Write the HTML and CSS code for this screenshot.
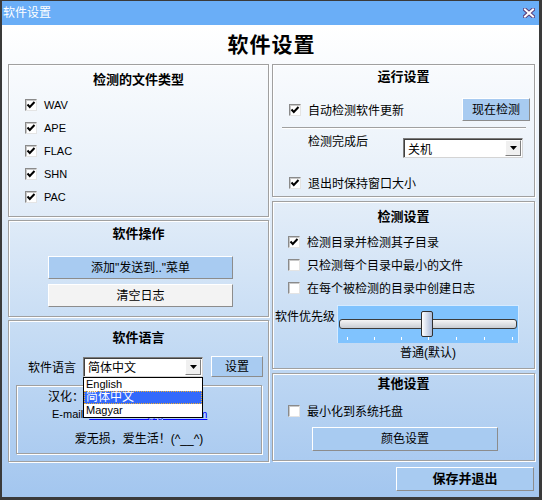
FILE: index.html
```html
<!DOCTYPE html>
<html lang="zh-CN">
<head>
<meta charset="utf-8">
<title>软件设置</title>
<link rel="stylesheet" href="styles.css">
</head>
<body>
<div class="win">
  <div class="titlebar">
    <span class="tb-text">软件设置</span>
    <svg class="close" width="12" height="10" viewBox="0 0 12 10"><path d="M2 1.5 L10 8.5 M10 1.5 L2 8.5" stroke="#5b3d7a" stroke-width="4" stroke-linecap="square"/><path d="M2 1.5 L10 8.5 M10 1.5 L2 8.5" stroke="#ffffff" stroke-width="2" stroke-linecap="square"/></svg>
  </div>
  <div class="client">
    <h1 class="big">软件设置</h1>
    <div class="cols">
      <div class="col">
        <section class="panel p-files">
          <h2>检测的文件类型</h2>
          <div class="checks">
            <div class="cb"><span class="box"><svg width="10" height="10" viewBox="0 0 10 10"><path d="M1.5 4.5 L3.8 7 L8.5 2" fill="none" stroke="#000" stroke-width="2"/></svg></span><span class="lat">WAV</span></div>
            <div class="cb"><span class="box"><svg width="10" height="10" viewBox="0 0 10 10"><path d="M1.5 4.5 L3.8 7 L8.5 2" fill="none" stroke="#000" stroke-width="2"/></svg></span><span class="lat">APE</span></div>
            <div class="cb"><span class="box"><svg width="10" height="10" viewBox="0 0 10 10"><path d="M1.5 4.5 L3.8 7 L8.5 2" fill="none" stroke="#000" stroke-width="2"/></svg></span><span class="lat">FLAC</span></div>
            <div class="cb"><span class="box"><svg width="10" height="10" viewBox="0 0 10 10"><path d="M1.5 4.5 L3.8 7 L8.5 2" fill="none" stroke="#000" stroke-width="2"/></svg></span><span class="lat">SHN</span></div>
            <div class="cb"><span class="box"><svg width="10" height="10" viewBox="0 0 10 10"><path d="M1.5 4.5 L3.8 7 L8.5 2" fill="none" stroke="#000" stroke-width="2"/></svg></span><span class="lat">PAC</span></div>
          </div>
        </section>
        <section class="panel p-ops">
          <h2>软件操作</h2>
          <div class="btn op blue">添加"发送到.."菜单</div>
          <div class="btn op light">清空日志</div>
        </section>
        <section class="panel p-lang">
          <h2>软件语言</h2>
          <div class="lang-row">
            <span class="lbl">软件语言</span>
            <div class="select-wrap">
              <div class="select"><span class="sel-text">简体中文</span><span class="sel-btn"><svg width="7" height="4" viewBox="0 0 7 4"><path d="M0 0 H7 L3.5 4 Z" fill="#000"/></svg></span></div>
              <ul class="dropdown">
                <li class="lat">English</li>
                <li class="hl">简体中文</li>
                <li class="lat">Magyar</li>
              </ul>
            </div>
            <div class="btn setbtn">设置</div>
          </div>
          <div class="group">
            <div class="g1">汉化：</div>
            <div class="g2"><span class="lat">E-mail:</span><a class="mail">lossless_cn@gmail.com</a></div>
            <div class="g3">爱无损，爱生活！(^__^)</div>
          </div>
        </section>
      </div>
      <div class="col">
        <section class="panel p-run">
          <h2>运行设置</h2>
          <div class="run-row">
            <div class="cb"><span class="box"><svg width="10" height="10" viewBox="0 0 10 10"><path d="M1.5 4.5 L3.8 7 L8.5 2" fill="none" stroke="#000" stroke-width="2"/></svg></span><span>自动检测软件更新</span></div>
            <div class="btn nowbtn">现在检测</div>
          </div>
          <div class="sep"></div>
          <div class="after-row">
            <span class="after-lbl">检测完成后</span>
            <div class="select"><span class="sel-text">关机</span><span class="sel-btn"><svg width="7" height="4" viewBox="0 0 7 4"><path d="M0 0 H7 L3.5 4 Z" fill="#000"/></svg></span></div>
          </div>
          <div class="cb keep"><span class="box"><svg width="10" height="10" viewBox="0 0 10 10"><path d="M1.5 4.5 L3.8 7 L8.5 2" fill="none" stroke="#000" stroke-width="2"/></svg></span><span>退出时保持窗口大小</span></div>
        </section>
        <section class="panel p-detect">
          <h2>检测设置</h2>
          <div class="checks2">
            <div class="cb"><span class="box"><svg width="10" height="10" viewBox="0 0 10 10"><path d="M1.5 4.5 L3.8 7 L8.5 2" fill="none" stroke="#000" stroke-width="2"/></svg></span><span>检测目录并检测其子目录</span></div>
            <div class="cb"><span class="box"></span><span>只检测每个目录中最小的文件</span></div>
            <div class="cb"><span class="box"></span><span>在每个被检测的目录中创建日志</span></div>
          </div>
          <div class="prio">
            <span class="prio-lbl">软件优先级</span>
            <div class="slider-col">
              <div class="slider">
                <div class="track"></div>
                <div class="thumb"></div>
                <span class="tick" style="left:9px"></span>
                <span class="tick" style="left:36px"></span>
                <span class="tick" style="left:63px"></span>
                <span class="tick" style="left:90px"></span>
                <span class="tick" style="left:118px"></span>
                <span class="tick" style="left:146px"></span>
                <span class="tick" style="left:174px"></span>
              </div>
              <div class="prio-val">普通(默认)</div>
            </div>
          </div>
        </section>
        <section class="panel p-other">
          <h2>其他设置</h2>
          <div class="cb tray"><span class="box"></span><span>最小化到系统托盘</span></div>
          <div class="btn colorbtn">颜色设置</div>
        </section>
        <div class="btn savebtn">保存并退出</div>
      </div>
    </div>
  </div>
</div>
</body>
</html>
```

FILE: styles.css
```css
* { box-sizing: border-box; margin: 0; padding: 0; }
html, body { width: 542px; height: 500px; overflow: hidden; }
body {
  font-family: "Liberation Sans", "Noto Sans CJK SC", sans-serif;
  font-size: 12px;
  color: #000;
  background: #fff;
}
.win {
  width: 542px;
  height: 500px;
  border-style: solid;
  border-color: #3a3a3a;
  border-width: 1px 3px 3px 2px;
  display: flex;
  flex-direction: column;
}
.titlebar {
  height: 24px;
  flex: none;
  background: #6aaef7;
  color: #fff;
  display: flex;
  align-items: center;
  padding: 0 4px 0 1px;
  line-height: 14px;
}
.tb-text { font-size: 12px; }
.close { margin-left: auto; display: block; }
.client {
  flex: 1;
  background: linear-gradient(#ffffff 0%, #e6eff9 35%, #c6dcf4 65%, #a3c6ef 100%);
  padding: 0 4px 0 6px;
}
.big {
  height: 39px;
  line-height: 39px;
  font-size: 21px;
  font-weight: bold;
  text-align: center;
  letter-spacing: 1px;
}
.cols {
  display: grid;
  grid-template-columns: 261px 263px;
  column-gap: 3px;
}
.col { display: flex; flex-direction: column; }
.panel {
  border: 1px solid #a0a0a0;
  box-shadow: inset 1px 1px 0 #fff, 1px 1px 0 #fff;
  position: relative;
}
h2 {
  font-size: 13px;
  font-weight: bold;
  line-height: 16px;
  text-align: center;
}
.lat { font-size: 11px; }
.cb { display: flex; align-items: center; height: 23px; }
.box {
  width: 12px;
  height: 12px;
  flex: none;
  margin-right: 7px;
  background: #fff;
  border: 1px solid;
  border-color: #8a8a8a #e4e4e4 #e4e4e4 #8a8a8a;
  box-shadow: inset 1px 1px 0 #c8c8c8;
  display: flex;
  align-items: center;
  justify-content: center;
}
.box svg { display: block; }

/* left panels */
.p-files { height: 153px; padding-top: 7px; }
.checks { margin-top: 5px; padding-left: 16px; }
.p-ops { height: 97px; margin-top: 3px; padding-top: 5px; }
.btn {
  display: flex;
  align-items: center;
  justify-content: center;
  border: 1px solid;
  border-color: #ffffff #8c8c8c #8c8c8c #ffffff;
  background: #a8cbf1;
  line-height: 14px;
}
.op { width: 185px; height: 23px; margin-left: 39px; }
.op.blue { margin-top: 14px; }
.op.light { margin-top: 5px; background: #f3f3f3; }
.p-lang { height: 142px; margin-top: 3px; padding-top: 9px; }
.lang-row { display: flex; align-items: center; margin-top: 10px; padding-left: 19px; height: 21px; }
.lbl { width: 55px; }
.select-wrap { position: relative; }
.select {
  width: 120px;
  height: 20px;
  background: #fff;
  border: 1px solid;
  border-color: #7c7c7c #d4d4d4 #d4d4d4 #7c7c7c;
  box-shadow: inset 1px 1px 0 #404040;
  display: flex;
  align-items: center;
  padding: 1px 1px 1px 4px;
}
.sel-text { flex: 1; }
.sel-btn {
  width: 16px;
  height: 16px;
  background: #f0f0f0;
  border: 1px solid;
  border-color: #ffffff #808080 #808080 #ffffff;
  display: flex;
  align-items: center;
  justify-content: center;
}
.sel-btn svg { display: block; }
.dropdown {
  position: absolute;
  left: 0;
  top: 20px;
  width: 120px;
  height: 41px;
  background: #fff;
  border: 1px solid #000;
  list-style: none;
  z-index: 5;
}
.dropdown li { height: 13px; line-height: 13px; padding-left: 2px; white-space: nowrap; }
.dropdown li.hl {
  background: #3369fb;
  color: #fff;
  outline: 1px dotted #f0b030;
  outline-offset: -1px;
  font-size: 12px;
}
.setbtn { width: 52px; height: 21px; margin-left: 8px; }
.group {
  width: 246px;
  height: 69px;
  margin: 8px 0 0 7px;
  border: 1px solid #a0a0a0;
  box-shadow: inset 1px 1px 0 #fff, 1px 1px 0 #fff;
  line-height: 14px;
}
.g1 { padding-left: 31px; margin-top: 4px; }
.g2 { padding-left: 35px; margin-top: 3px; white-space: nowrap; }
.mail { color: #0000ff; text-decoration: underline; font-size: 11px; margin-left: 3px; }
.g3 { text-align: center; margin-top: 11px; }

/* right panels */
.p-run { height: 133px; padding-top: 4px; }
.run-row { display: flex; align-items: center; justify-content: space-between; margin-top: 13px; height: 23px; padding: 0 4px 0 16px; }
.nowbtn { width: 68px; height: 23px; }
.sep { margin: 6px 8px 0 9px; height: 2px; border-top: 1px solid #a0a0a0; border-bottom: 1px solid #fff; }
.after-row { display: flex; margin-top: 9px; height: 20px; padding-left: 35px; }
.after-lbl { width: 95px; line-height: 14px; margin-top: -3px; }
.keep { margin-top: 13px; padding-left: 16px; }
.p-detect { height: 168px; margin-top: 4px; padding-top: 7px; }
.checks2 { margin-top: 5px; padding-left: 15px; }
.prio { display: flex; margin-top: 6px; padding-left: 2px; }
.prio-lbl { width: 62px; line-height: 14px; margin-top: 5px; }
.slider-col { display: flex; flex-direction: column; align-items: center; }
.slider {
  position: relative;
  width: 182px;
  height: 38px;
  background: #80c3fe;
  border-top: 1px solid #d6ebff;
  border-left: 1px solid #d6ebff;
  border-right: 1px solid #d6ebff;
}
.track {
  position: absolute;
  left: 1px;
  right: 1px;
  top: 13px;
  height: 10px;
  border: 1px solid #3c3c3c;
  border-radius: 3px;
  background: linear-gradient(#f6f6f6, #c9cdd3);
}
.thumb {
  position: absolute;
  left: 83px;
  top: 5px;
  width: 12px;
  height: 26px;
  border: 1px solid #303030;
  border-radius: 2px;
  background: linear-gradient(to right, #ffffff, #a9bad8);
}
.tick { position: absolute; top: 31px; width: 1px; height: 3px; background: #fff; }
.prio-val { margin-top: 3px; line-height: 14px; }
.p-other { height: 88px; margin-top: 4px; padding-top: 2px; }
.tray { margin-top: 7px; padding-left: 15px; }
.colorbtn { width: 186px; height: 24px; margin: 5px 0 0 39px; }
.savebtn { width: 138px; height: 24px; margin: 6px 1px 0 auto; font-weight: bold; font-size: 13px; }
```
